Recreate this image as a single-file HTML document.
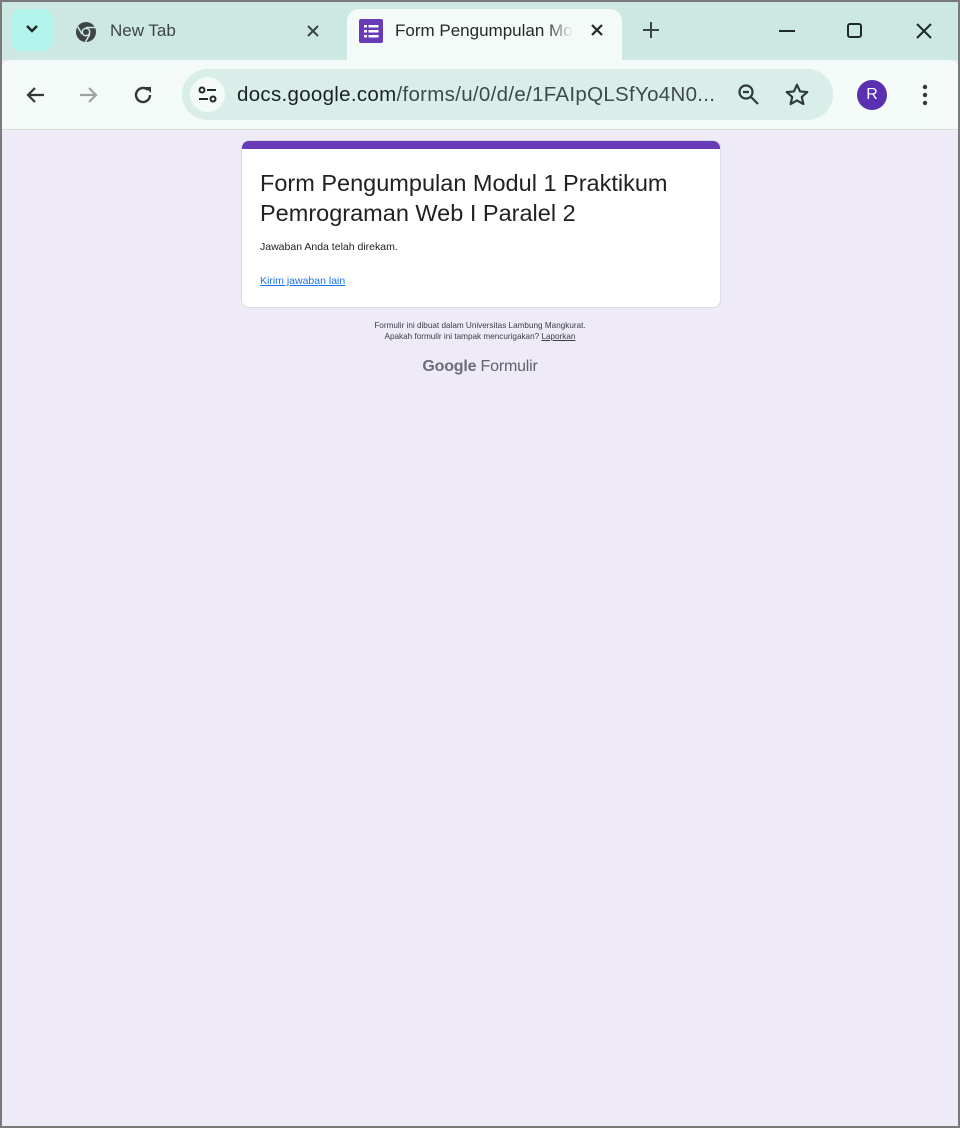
<!DOCTYPE html>
<html><head><meta charset="utf-8"><style>
*{margin:0;padding:0;box-sizing:border-box}
body{width:960px;height:1128px;overflow:hidden;font-family:"Liberation Sans",Arial,sans-serif;background:#efeaf7;position:relative}
.frame{position:absolute;inset:0;border:2px solid #7a7a7a;pointer-events:none;z-index:10}
.strip{position:absolute;left:0;top:0;width:960px;height:60px;background:#cde7e2}
.tb{position:absolute;left:0;top:60px;width:960px;height:70px;background:#f3faf8;border-radius:12px 12px 0 0;border-bottom:1px solid #d6dedc}
.abs{position:absolute}
.tabact{position:absolute;left:347px;top:9px;width:275px;height:55px;background:#f3faf8;border-radius:12px 12px 0 0}
.t{font-size:17px;color:#1f2a28}
.omni{position:absolute;left:182px;top:69px;width:651px;height:51px;background:#d9ede9;border-radius:26px}
.card{position:absolute;left:241px;top:140px;width:480px;height:168px;background:#fff;border:1px solid #dadce0;border-radius:8px;overflow:hidden}
</style></head><body>
<div class="strip"></div>
<div class="abs" style="left:11px;top:9px;width:42px;height:42px;background:#b3f5ec;border-radius:10px"></div>
<svg class="abs" style="left:24px;top:23px" width="16" height="12"><path d="M3 3l5 5 5-5" stroke="#1f2a28" stroke-width="2.5" fill="none"/></svg>
<svg class="abs" style="left:74px;top:20px" width="24" height="24" viewBox="0 0 24 24"><circle cx="12" cy="12" r="10" fill="#3c4543"/><circle cx="12" cy="12" r="4.5" fill="#cde7e2"/><circle cx="12" cy="12" r="3" fill="#3c4543"/><path d="M12 7.5h9M8.1 14.2L3.6 6.5M15.9 14.2l-4.5 7.7" stroke="#cde7e2" stroke-width="1.5"/></svg>
<div class="abs t" style="left:110px;top:21px;color:#3c4543">New Tab</div>
<svg class="abs" style="left:306px;top:24px" width="14" height="14"><path d="M2 2l10 10M12 2L2 12" stroke="#3c4543" stroke-width="2"/></svg>
<div class="tabact"></div>
<svg class="abs" style="left:359px;top:19px" width="24" height="24"><rect width="24" height="24" rx="2" fill="#673ab7"/><g fill="#fff"><rect x="5" y="6" width="3" height="2.5"/><rect x="9.5" y="6" width="10" height="2.5"/><rect x="5" y="11" width="3" height="2.5"/><rect x="9.5" y="11" width="10" height="2.5"/><rect x="5" y="16" width="3" height="2.5"/><rect x="9.5" y="16" width="10" height="2.5"/></g></svg>
<div class="abs t" style="left:395px;top:21px;width:178px;white-space:nowrap;overflow:hidden;-webkit-mask-image:linear-gradient(90deg,#000 85%,transparent)">Form Pengumpulan Modul</div>
<svg class="abs" style="left:590px;top:23px" width="14" height="14"><path d="M2 2l10 10M12 2L2 12" stroke="#1f2a28" stroke-width="2.2"/></svg>
<svg class="abs" style="left:642px;top:21px" width="18" height="18"><path d="M9 1v16M1 9h16" stroke="#3c4543" stroke-width="2"/></svg>
<svg class="abs" style="left:778px;top:29px" width="18" height="4"><path d="M1 2h16" stroke="#1f2a28" stroke-width="2"/></svg>
<svg class="abs" style="left:846px;top:22px" width="18" height="18"><rect x="2" y="2" width="13" height="13" rx="2" stroke="#1f2a28" stroke-width="2" fill="none"/></svg>
<svg class="abs" style="left:915px;top:22px" width="18" height="18"><path d="M2 2l14 14M16 2L2 16" stroke="#1f2a28" stroke-width="2"/></svg>

<div class="tb"></div>
<svg class="abs" style="left:24px;top:84px" width="22" height="22"><path d="M20 11H4M11 4l-7 7 7 7" stroke="#2f3a38" stroke-width="2.2" fill="none"/></svg>
<svg class="abs" style="left:78px;top:84px" width="22" height="22"><path d="M2 11h16M11 4l7 7-7 7" stroke="#9aa3a1" stroke-width="2.2" fill="none"/></svg>
<svg class="abs" style="left:132px;top:84px" width="22" height="22"><path d="M18 11a7 7 0 1 1-2.2-5.1" stroke="#2f3a38" stroke-width="2.4" fill="none"/><path d="M13 3h6v6z" fill="#2f3a38"/></svg>
<div class="omni"></div>
<div class="abs" style="left:190px;top:77px;width:35px;height:35px;border-radius:50%;background:#f3faf8"></div>
<svg class="abs" style="left:197px;top:85px" width="22" height="20"><circle cx="5" cy="5" r="2.5" stroke="#1f2a28" stroke-width="2" fill="none"/><path d="M10 5h9M2 14h9" stroke="#1f2a28" stroke-width="2"/><circle cx="16" cy="14" r="2.5" stroke="#1f2a28" stroke-width="2" fill="none"/></svg>
<div class="abs" style="left:237px;top:83px;font-size:20.5px;color:#3e4a48;white-space:nowrap;letter-spacing:0.3px"><span style="color:#1a2321">docs.google.com</span>/forms/u/0/d/e/1FAIpQLSfYo4N0...</div>
<svg class="abs" style="left:737px;top:83px" width="24" height="24"><circle cx="9" cy="9" r="6.5" stroke="#2f3a38" stroke-width="2.2" fill="none"/><path d="M14 14l7 7M6 9h6" stroke="#2f3a38" stroke-width="2.2"/></svg>
<svg class="abs" style="left:784px;top:82px" width="26" height="26" viewBox="0 0 24 24"><path d="M12 2.5l2.8 6.2 6.7.6-5.1 4.5 1.5 6.6L12 17l-5.9 3.4 1.5-6.6L2.5 9.3l6.7-.6z" stroke="#2f3a38" stroke-width="2" fill="none" stroke-linejoin="round"/></svg>
<div class="abs" style="left:857px;top:80px;width:30px;height:30px;border-radius:50%;background:#5a2fb0;color:#fff;font-size:16px;text-align:center;line-height:30px">R</div>
<svg class="abs" style="left:921px;top:83px" width="8" height="24"><circle cx="4" cy="4" r="2.2" fill="#2f3a38"/><circle cx="4" cy="12" r="2.2" fill="#2f3a38"/><circle cx="4" cy="20" r="2.2" fill="#2f3a38"/></svg>

<div class="card">
<div style="height:8px;background:#673ab7"></div>
<div style="position:absolute;left:18px;top:27px;font-size:23.5px;line-height:30px;color:#202124">Form Pengumpulan Modul 1 Praktikum<br>Pemrograman Web I Paralel 2</div>
<div style="position:absolute;left:18px;top:100px;font-size:10.5px;color:#202124">Jawaban Anda telah direkam.</div>
<div style="position:absolute;left:18px;top:134px;font-size:10.5px;color:#1a73e8;text-decoration:underline">Kirim jawaban lain</div>
</div>
<div class="abs" style="left:0;width:960px;top:320px;text-align:center;font-size:8.5px;line-height:11px;color:#3c4043;transform:scaleX(0.96)">Formulir ini dibuat dalam Universitas Lambung Mangkurat.<br>Apakah formulir ini tampak mencurigakan? <u>Laporkan</u></div>
<div class="abs" style="left:0;width:960px;top:358px;text-align:center;font-size:16px;color:#5f6368;letter-spacing:-0.2px"><span style="font-weight:bold;color:#6b6e72">Google</span> Formulir</div>
<div class="frame"></div>
</body></html>
